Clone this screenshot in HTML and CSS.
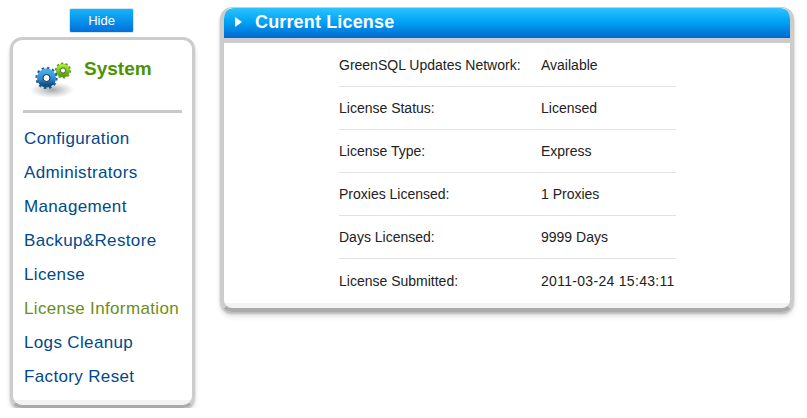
FILE: index.html
```html
<!DOCTYPE html>
<html lang="en">
<head>
<meta charset="utf-8">
<title>Current License</title>
<link rel="stylesheet" href="styles.css">
</head>
<body>
<div class="page">
  <aside class="side">
    <button class="hide" type="button">Hide</button>
    <div class="card side-card">
      <div class="side-head">
        <svg class="gears" width="50" height="50" viewBox="0 0 50 50" aria-hidden="true">
          <defs>
            <radialGradient id="sh"><stop offset="0" stop-color="#a8a8a8"/><stop offset=".55" stop-color="#dcdcdc"/><stop offset="1" stop-color="#fff"/></radialGradient>
            <linearGradient id="bl" x1="0" y1="0" x2="0" y2="1"><stop offset="0" stop-color="#45ace8"/><stop offset=".6" stop-color="#2a86cc"/><stop offset="1" stop-color="#15507f"/></linearGradient>
            <linearGradient id="gr" x1="0" y1="0" x2="0" y2="1"><stop offset="0" stop-color="#a4e832"/><stop offset="1" stop-color="#5aa014"/></linearGradient>
          </defs>
          <ellipse cx="27" cy="40" rx="22" ry="8" fill="url(#sh)"/>
          <g fill="none">
            <circle cx="38" cy="20.5" r="4.8" stroke="url(#gr)" stroke-width="4.4"/>
            <circle cx="38" cy="20.5" r="7.3" stroke="#5f9f18" stroke-width="1.6" stroke-dasharray="2.3 2.29"/>
            <circle cx="38" cy="20.5" r="2.6" stroke="#2c4a10" stroke-width=".8"/>
          </g>
          <g fill="none">
            <circle cx="21.5" cy="28" r="10" stroke="#1c5f96" stroke-width="2.2" stroke-dasharray="2.6 2.64"/>
            <circle cx="21.5" cy="28" r="6.5" stroke="url(#bl)" stroke-width="6"/>
            <circle cx="21.5" cy="28" r="3.5" stroke="#0f2f4c" stroke-width="1"/>
          </g>
        </svg>
        <h2 class="side-title">System</h2>
      </div>
      <nav class="menu">
        <a class="item">Configuration</a>
        <a class="item">Administrators</a>
        <a class="item">Management</a>
        <a class="item">Backup&amp;Restore</a>
        <a class="item">License</a>
        <a class="item active">License Information</a>
        <a class="item">Logs Cleanup</a>
        <a class="item">Factory Reset</a>
      </nav>
    </div>
  </aside>
  <main class="card main-card">
    <header class="bar">
      <span class="arrow"></span>
      <h1 class="bar-title">Current License</h1>
    </header>
    <div class="rows">
      <div class="row"><span class="key">GreenSQL Updates Network:</span><span>Available</span></div>
      <div class="row"><span class="key">License Status:</span><span>Licensed</span></div>
      <div class="row"><span class="key">License Type:</span><span>Express</span></div>
      <div class="row"><span class="key">Proxies Licensed:</span><span>1 Proxies</span></div>
      <div class="row"><span class="key">Days Licensed:</span><span>9999 Days</span></div>
      <div class="row"><span class="key">License Submitted:</span><span class="stamp">2011-03-24 15:43:11</span></div>
    </div>
  </main>
</div>
</body>
</html>
```
FILE: styles.css
```css
* { box-sizing: border-box; }
html, body { margin: 0; background: #fff; }
body { font-family: "Liberation Sans", Arial, sans-serif; color: #222; }
.page { display: flex; align-items: flex-start; gap: 25px; padding: 7px 13px 0 10px; }
.side { width: 185px; flex: none; display: flex; flex-direction: column; align-items: flex-start; }
.hide {
  width: 65px; height: 25px; margin: 1px 0 0 59px; padding: 0;
  border: 1px solid #d5e4ee; border-radius: 2px;
  background: linear-gradient(#14b4fb, #0070dc);
  color: #fff; font: 13px "Liberation Sans", Arial, sans-serif;
}
.card { background: #fff; border-style: solid; border-color: #ccc; box-shadow: 0 2px 2px #bbb, 0 5px 5px #e6e6e6; }
.side-card {
  width: 185px; height: 371px; margin-top: 4px; padding: 0 10px;
  border-width: 3px 3px 3px; border-bottom-color: #aaa; border-radius: 12px;
  background: linear-gradient(#fff calc(100% - 5px), #f3f3f3 0);
}
.side-head { display: flex; height: 73px; border-bottom: 3px solid #c8c8c8; }
.gears { margin: 10px 0 0 2px; flex: none; }
.side-title { margin: 18px 0 0 9px; font-size: 19px; line-height: 22px; font-weight: 700; color: #4f9400; }
.menu { display: flex; flex-direction: column; padding-top: 9px; }
.item { height: 34px; line-height: 34px; padding-left: 1px; font-size: 17px; letter-spacing: .35px; color: #004a8a; }
.item.active { color: #6b8e14; }
.main-card {
  flex: 1; height: 305px; overflow: hidden;
  border-width: 1px 4px 4px; border-bottom-color: #aaa; border-radius: 12px;
  background: linear-gradient(#fff calc(100% - 5px), #f3f3f3 0);
}
.bar {
  display: flex; align-items: center; height: 35px; margin: 0 -2px 0 -2px; padding: 0 0 2px 13px;
  border-bottom: 5px solid #ccc; border-radius: 12px 12px 0 0;
  background: linear-gradient(#2cc3ff, #00a4f5 45%, #0068d2);
  background-clip: padding-box;
}
.arrow { width: 0; height: 0; border-left: 7px solid #fff; border-top: 5px solid transparent; border-bottom: 5px solid transparent; }
.bar-title { margin: 0 0 0 13px; font-size: 18px; line-height: 22px; font-weight: 700; color: #fff; letter-spacing: .15px; }
.rows { width: 337px; margin: 1px 0 0 115px; }
.row { display: flex; height: 43px; align-items: center; font-size: 14px; color: #222; border-bottom: 1px solid #e2e2e2; }
.row:last-child { border-bottom: 0; }
.key { width: 202px; flex: none; }
.stamp { letter-spacing: .3px; }
```
